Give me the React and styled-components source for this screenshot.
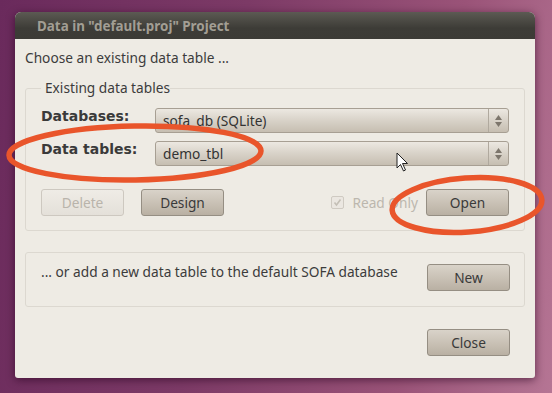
import styled, { createGlobalStyle } from "styled-components"

const GlobalStyle = createGlobalStyle`
  html, body {
    margin: 0;
    padding: 0;
  }
  body {
    width: 552px;
    height: 393px;
    overflow: hidden;
    font-family: "Noto Sans", "DejaVu Sans", sans-serif;
    background: linear-gradient(100deg, #6a2a5c 0%, #7c3a66 40%, #9a5378 75%, #b57594 100%);
  }
`

const Desktop = styled.div`
  position: relative;
  width: 552px;
  height: 393px;
  padding: 12px 0 0 15px;
  box-sizing: border-box;
`

const Window = styled.div`
  width: 520px;
  height: 366px;
  display: flex;
  flex-direction: column;
  border-radius: 6px 6px 3px 3px;
  overflow: hidden;
  background: #eeebe4;
  box-shadow: 0 2px 8px rgba(40, 0, 30, 0.6);
`

const TitleBar = styled.div`
  height: 27px;
  flex: none;
  display: flex;
  align-items: center;
  padding-left: 22px;
  background: linear-gradient(#5c5a53, #3d3c37 60%, #3c3b36);
  color: #a29e94;
  font-weight: bold;
  font-size: 13.4px;
`

const Body = styled.div`
  flex: 1;
  display: flex;
  flex-direction: column;
  padding: 8px 10px 0 10px;
  color: #3c3c3c;
  font-size: 13.7px;
`

const Intro = styled.div`
  height: 22px;
  line-height: 22px;
`

const Frame = styled.fieldset`
  margin: ${(p) => p.$top}px 0 0 0;
  padding: ${(p) => p.$pad};
  border: 1px solid #dcd8d0;
  border-radius: 3px;
  min-width: 0;
  legend {
    padding: 0 0 0 4px;
    margin-left: 0;
    line-height: 16px;
  }
`

const FieldRow = styled.div`
  display: flex;
  align-items: center;
  height: 25px;
  margin-bottom: ${(p) => p.$gap || 0}px;
`

const Label = styled.div`
  width: 114px;
  font-family: "DejaVu Sans", sans-serif;
  font-weight: bold;
  font-size: 14px;
  color: #3a3a3a;
  align-self: flex-start;
  line-height: 16px;
`

const Combo = styled.div`
  width: 354px;
  height: 25px;
  box-sizing: border-box;
  display: flex;
  border: 1px solid #a79f93;
  border-radius: 3px;
  background: linear-gradient(#ece8e1, #d8d2c8 50%, #c6beb1);
  color: #333;
`

const ComboText = styled.div`
  flex: 1;
  padding-left: 7px;
  line-height: 23px;
`

const ComboArrows = styled.div`
  width: 19px;
  border-left: 1px solid #b0a99e;
  display: flex;
  flex-direction: column;
  align-items: center;
  justify-content: center;
  gap: 2px;
`

const Actions = styled.div`
  display: flex;
  align-items: center;
  margin-top: 23px;
  gap: 17px;
`

const Spacer = styled.div`
  flex: 1;
`

const Button = styled.div`
  width: 83px;
  height: 27px;
  box-sizing: border-box;
  flex: none;
  display: flex;
  align-items: center;
  justify-content: center;
  border-radius: 3px;
  font-size: 13.7px;
  margin-top: ${(p) => p.$top || 0}px;
  border: 1px solid ${(p) => (p.$disabled ? "#cdc8c0" : "#958e83")};
  color: ${(p) => (p.$disabled ? "#b9b4ab" : "#3a3a3a")};
  background: ${(p) =>
    p.$disabled
      ? "linear-gradient(#efece6, #e4e0d9)"
      : "linear-gradient(#d9d3c9, #c8c0b4 55%, #b9b0a3)"};
`

const Check = styled.div`
  display: flex;
  align-items: center;
  gap: 8px;
  color: #bcb7ae;
  margin-right: -9px;
`

const CheckBox = styled.div`
  width: 11px;
  height: 11px;
  border: 1px solid #cfcac2;
  border-radius: 2px;
  background: #ebe7e1;
  display: flex;
  align-items: center;
  justify-content: center;
`

const NewRow = styled.div`
  display: flex;
  align-items: flex-start;
  justify-content: space-between;
`

const NewText = styled.div`
  padding-top: 9px;
`

const Footer = styled.div`
  display: flex;
  justify-content: flex-end;
  margin-top: 22px;
  padding-right: 15px;
`

const Overlay = styled.svg`
  position: absolute;
  left: 0;
  top: 0;
  pointer-events: none;
`

const Arrows = () => (
  <ComboArrows>
    <svg width="7" height="5" viewBox="0 0 7 5">
      <path d="M3.5 0 L7 5 L0 5 Z" fill="#7d766c" />
    </svg>
    <svg width="7" height="5" viewBox="0 0 7 5">
      <path d="M0 0 L7 0 L3.5 5 Z" fill="#7d766c" />
    </svg>
  </ComboArrows>
)

const App = () => {
  return (
    <>
      <GlobalStyle />
      <Desktop>
        <Window>
          <TitleBar>Data in "default.proj" Project</TitleBar>
          <Body>
            <Intro>Choose an existing data table ...</Intro>
            <Frame $top={11} $pad="12px 15px 14px 15px">
              <legend>Existing data tables</legend>
              <FieldRow $gap={8}>
                <Label>Databases:</Label>
                <Combo>
                  <ComboText>sofa_db (SQLite)</ComboText>
                  <Arrows />
                </Combo>
              </FieldRow>
              <FieldRow>
                <Label>Data tables:</Label>
                <Combo>
                  <ComboText>demo_tbl</ComboText>
                  <Arrows />
                </Combo>
              </FieldRow>
              <Actions>
                <Button $disabled>Delete</Button>
                <Button>Design</Button>
                <Spacer />
                <Check>
                  <CheckBox>
                    <svg width="9" height="9" viewBox="0 0 9 9">
                      <path d="M1.5 4.5 L3.5 7 L7.5 1.5" stroke="#c4bfb6" strokeWidth="1.6" fill="none" />
                    </svg>
                  </CheckBox>
                  Read Only
                </Check>
                <Button>Open</Button>
              </Actions>
            </Frame>
            <Frame $top={21} $pad="0 14px 15px 15px">
              <NewRow>
                <NewText>... or add a new data table to the default SOFA database</NewText>
                <Button $top={11}>New</Button>
              </NewRow>
            </Frame>
            <Footer>
              <Button>Close</Button>
            </Footer>
          </Body>
        </Window>
        <Overlay width="552" height="393" viewBox="0 0 552 393">
          <ellipse cx="135" cy="153" rx="126" ry="27" fill="none" stroke="#e9552b" strokeWidth="5.5" transform="rotate(-1 135 153)" />
          <ellipse cx="467" cy="205" rx="75" ry="27" fill="none" stroke="#e9552b" strokeWidth="5.5" transform="rotate(-4 467 205)" />
          <path
            d="M397 153 L397 168 L400.5 164.5 L403.5 171 L405.5 170 L402.5 163.5 L407.5 163.5 Z"
            fill="#fff"
            stroke="#222"
            strokeWidth="1"
            strokeLinejoin="round"
          />
        </Overlay>
      </Desktop>
    </>
  )
}

export default App
